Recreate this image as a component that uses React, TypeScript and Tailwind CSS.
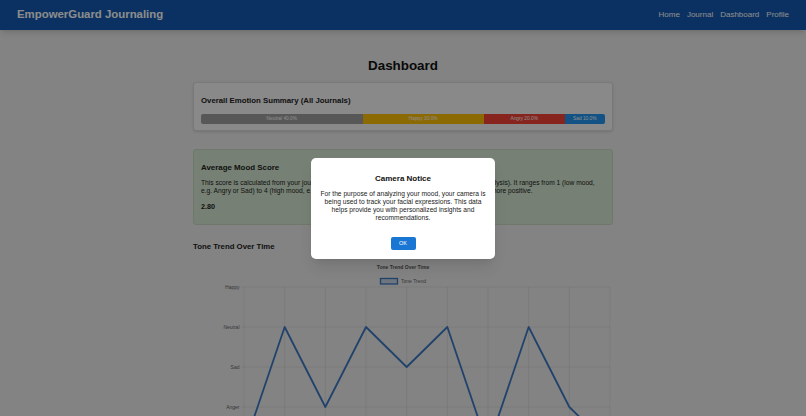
import React from "react";

const levels = ["Happy", "Neutral", "Sad", "Anger", "Fear"];
const values = [4, 1, 3, 1, 2, 1, 4, 1, 3, 4];

function ToneChart() {
  const left = 51;
  const step = 40.667;
  const top = 29;
  const rowH = 40;
  const points = values.map((v, i) => `${left + i * step},${top + v * rowH}`).join(" ");

  return (
    <svg width="420" height="200" viewBox="0 0 420 200" className="block">
      <text x="210" y="10.8" textAnchor="middle" fontSize="5" fontWeight="bold" fill="#555">
        Tone Trend Over Time
      </text>
      <rect x="187.5" y="20.5" width="17" height="5.5" fill="rgba(59,120,196,0.2)" stroke="#3b78c4" strokeWidth="1.3" />
      <text x="208" y="25" fontSize="5" fill="#666">
        Tone Trend
      </text>
      {levels.map((l, i) => (
        <g key={l}>
          <line x1={left - 3} x2="417" y1={top + i * rowH} y2={top + i * rowH} stroke="rgba(0,0,0,0.08)" strokeWidth="0.8" />
          <text x="46.5" y={top + i * rowH + 1.8} textAnchor="end" fontSize="5" fill="#666">
            {l}
          </text>
        </g>
      ))}
      {values.map((_, i) => (
        <line key={i} x1={left + i * step} x2={left + i * step} y1={top} y2="200" stroke="rgba(0,0,0,0.08)" strokeWidth="0.8" />
      ))}
      <polyline points={points} fill="none" stroke="#3b78c4" strokeWidth="1.8" strokeLinejoin="round" />
    </svg>
  );
}

export default function App() {
  return (
    <div className="relative h-[416px] overflow-hidden bg-[#eeeeee] font-['Liberation_Sans',Arial,sans-serif] text-[#222]">
      <header className="h-[30px] bg-[#135ab2] flex items-center justify-between px-[17px] shadow-md">
        <span className="text-white font-bold text-[11.4px]">EmpowerGuard Journaling</span>
        <nav className="flex gap-[7px] text-white text-[8px]">
          <a>Home</a>
          <a>Journal</a>
          <a>Dashboard</a>
          <a>Profile</a>
        </nav>
      </header>

      <main className="w-[420px] mx-auto">
        <h1 className="mt-[28px] mb-[8px] text-center font-bold text-[13.4px] leading-[16px] text-[#111]">Dashboard</h1>

        <section className="bg-[#f9f9f9] border border-[#dddddd] rounded-[3px] px-[7px] pt-[13px] pb-[6px] shadow-sm">
          <h3 className="font-bold text-[7.8px] leading-[10px] mb-[8px]">Overall Emotion Summary (All Journals)</h3>
          <div className="flex h-[10px] rounded-[2px] overflow-hidden text-[4.8px] text-white">
            <div className="w-[40%] bg-[#9e9e9e] flex items-center justify-center">Neutral 40.0%</div>
            <div className="w-[30%] bg-[#ffc107] flex items-center justify-center">Happy 30.0%</div>
            <div className="w-[20%] bg-[#f44336] flex items-center justify-center">Angry 20.0%</div>
            <div className="w-[10%] bg-[#2196f3] flex items-center justify-center">Sad 10.0%</div>
          </div>
        </section>

        <section className="mt-[18px] bg-[#d7ead3] border border-[#c8dcc4] rounded-[3px] px-[7px] pt-[13px] pb-[12px]">
          <h3 className="font-bold text-[7.9px] leading-[10px]">Average Mood Score</h3>
          <p className="mt-[6px] text-[6.67px] leading-[8px]">
            This score is calculated from your journal entries (based on sentiment of text and facial emotion analysis). It ranges from 1 (low mood, e.g. Angry or Sad) to 4 (high mood, e.g. Happy). A higher score indicates that your overall mood is more positive.
          </p>
          <p className="mt-[7px] font-bold text-[7.2px] leading-[10px]">2.80</p>
        </section>

        <h3 className="mt-[17px] font-bold text-[7.8px] leading-[10px]">Tone Trend Over Time</h3>
        <div className="mt-[6px]">
          <ToneChart />
        </div>
      </main>

      {/* camera notice modal with backdrop */}
      <div className="absolute inset-0 z-50 flex items-center justify-center bg-black/45">
        <div className="w-[184px] bg-white rounded-[5px] px-[9px] pt-[16px] pb-[9px] text-center shadow-lg">
          <h2 className="font-bold text-[8px] leading-[10px] text-[#111]">Camera Notice</h2>
          <p className="mt-[6px] text-[6.67px] leading-[8px] text-[#222]">
            For the purpose of analyzing your mood, your camera is being used to track your facial expressions. This data helps provide you with personalized insights and recommendations.
          </p>
          <button className="block mx-auto mt-[15px] h-[13px] w-[25px] bg-[#1976d2] text-white text-[5.5px] leading-[13px] rounded-[2px]">OK</button>
        </div>
      </div>
    </div>
  );
}
